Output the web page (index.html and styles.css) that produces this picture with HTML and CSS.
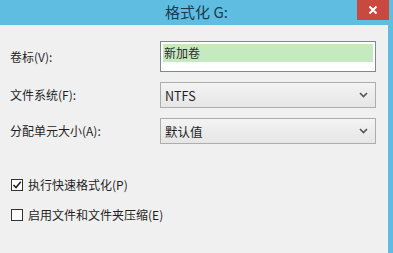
FILE: index.html
```html
<!DOCTYPE html>
<html lang="zh-CN">
<head>
<meta charset="utf-8">
<title>格式化 G:</title>
<link rel="stylesheet" href="styles.css">
</head>
<body>
<div class="window">
  <div class="titlebar">
    <span class="title">格式化 G:</span>
    <div class="close">
      <svg width="10" height="10" viewBox="0 0 10 10"><path d="M1.5 1.5 L8.5 8.5 M8.5 1.5 L1.5 8.5" stroke="#fff" stroke-width="2" fill="none"/></svg>
    </div>
  </div>
  <div class="content">
    <div class="form">
      <label class="label">卷标(V):</label>
      <div class="textbox"><span class="sel">新加卷</span></div>
      <label class="label">文件系统(F):</label>
      <div class="select"><span>NTFS</span><svg class="chev" width="9" height="6" viewBox="0 0 9 6"><path d="M1 1 L4.5 4.5 L8 1" stroke="#555" stroke-width="1.6" fill="none"/></svg></div>
      <label class="label">分配单元大小(A):</label>
      <div class="select"><span>默认值</span><svg class="chev" width="9" height="6" viewBox="0 0 9 6"><path d="M1 1 L4.5 4.5 L8 1" stroke="#555" stroke-width="1.6" fill="none"/></svg></div>
    </div>
    <div class="checks">
      <div class="check"><span class="box"><svg width="10" height="10" viewBox="0 0 10 10"><path d="M1.5 5 L4 7.5 L8.8 1.8" stroke="#222" stroke-width="1.6" fill="none"/></svg></span><span>执行快速格式化(P)</span></div>
      <div class="check"><span class="box"></span><span>启用文件和文件夹压缩(E)</span></div>
    </div>
  </div>
</div>
</body>
</html>
```
FILE: styles.css
```css
* { box-sizing: border-box; }
html, body { margin: 0; padding: 0; }
body {
  width: 393px;
  height: 253px;
  overflow: hidden;
  font-family: "Noto Sans CJK SC", "Noto Sans", sans-serif;
  font-size: 12px;
  color: #1f1f1f;
}
.window {
  width: 393px;
  height: 253px;
  background: #60bde2;
  display: flex;
  flex-direction: column;
}
.titlebar {
  position: relative;
  height: 25px;
  flex: none;
  display: flex;
  align-items: center;
  justify-content: center;
}
.title {
  font-size: 15px;
  color: #1a3a4c;
  margin-top: -2px;
}
.close {
  position: absolute;
  top: 0;
  right: 4px;
  width: 32px;
  height: 20px;
  background: #c9483f;
  display: flex;
  align-items: center;
  justify-content: center;
}
.content {
  flex: 1;
  margin-right: 5px;
  background: #f0f0f0;
  border-top: 1px solid #e6f3f8;
  padding: 15px 12px 0 10px;
}
.form {
  display: grid;
  grid-template-columns: 150px 216px;
  row-gap: 10px;
  align-items: center;
}
.label { line-height: 16px; }
.textbox {
  height: 31px;
  border: 1px solid #7d8a96;
  background: #fff;
  padding: 2px 2px 0 2px;
}
.sel {
  display: block;
  height: 18px;
  line-height: 18px;
  background: #c6eac0;
  padding-left: 1px;
  color: #2a2a2a;
}
.select {
  height: 26px;
  border: 1px solid #adadad;
  background: linear-gradient(#f3f3f3, #e6e6e6);
  display: flex;
  align-items: center;
  justify-content: space-between;
  padding: 0 7px 0 4px;
}
.select span { font-size: 12.5px; }
.checks {
  margin-top: 34px;
  display: flex;
  flex-direction: column;
  gap: 17px;
  padding-left: 1px;
}
.check {
  display: flex;
  align-items: center;
  gap: 5px;
  height: 13px;
}
.box {
  width: 12px;
  height: 12px;
  border: 1px solid #333;
  background: #fff;
  display: flex;
  align-items: center;
  justify-content: center;
}
```
